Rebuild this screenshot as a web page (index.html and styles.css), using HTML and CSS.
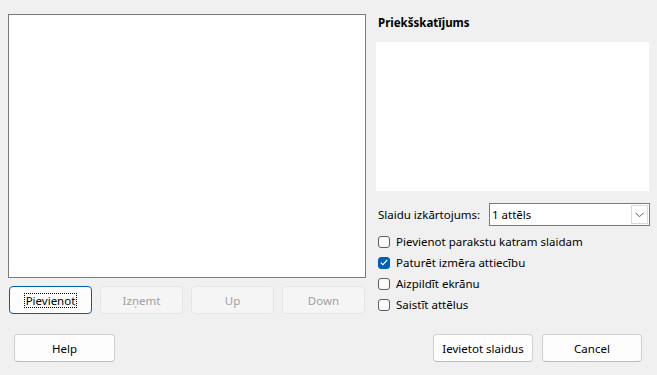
FILE: index.html
```html
<!DOCTYPE html>
<html lang="lv">
<head>
<meta charset="utf-8">
<title>Priekšskatījums</title>
<link rel="stylesheet" href="styles.css">
</head>
<body>
<div class="dialog">
  <div class="main">
    <div class="left">
      <div class="listbox"></div>
      <div class="btnrow">
        <button class="btn focused"><span class="focus">Pievienot</span></button>
        <button class="btn" disabled>Izņemt</button>
        <button class="btn" disabled>Up</button>
        <button class="btn" disabled>Down</button>
      </div>
    </div>
    <div class="right">
      <div class="title">Priekšskatījums</div>
      <div class="preview"></div>
      <div class="layout-row">
        <span class="label">Slaidu izkārtojums:</span>
        <div class="combo">
          <span class="combo-value">1 attēls</span>
          <span class="combo-btn">
            <svg width="9" height="6" viewBox="0 0 9 6"><path d="M0.5 0.8 L4.5 4.8 L8.5 0.8" fill="none" stroke="#5a5a5a" stroke-width="1"/></svg>
          </span>
        </div>
      </div>
      <div class="checks">
        <div class="check"><span class="box"></span><span>Pievienot parakstu katram slaidam</span></div>
        <div class="check"><span class="box checked"><svg width="8" height="7" viewBox="0 0 8 7"><path d="M0.8 3.6 L2.9 5.6 L7.2 1" fill="none" stroke="#fff" stroke-width="1.2"/></svg></span><span>Paturēt izmēra attiecību</span></div>
        <div class="check"><span class="box"></span><span>Aizpildīt ekrānu</span></div>
        <div class="check"><span class="box"></span><span>Saistīt attēlus</span></div>
      </div>
    </div>
  </div>
  <div class="footer">
    <button class="btn wide help">Help</button>
    <div class="footer-right">
      <button class="btn wide">Ievietot slaidus</button>
      <button class="btn wide">Cancel</button>
    </div>
  </div>
</div>
</body>
</html>
```
FILE: styles.css
```css
html, body {
  margin: 0;
  padding: 0;
  background: #f0f0f0;
}
body {
  font-family: "Segoe UI", "Noto Sans", "Open Sans", sans-serif;
  font-size: 11.5px;
  color: #000;
  width: 657px;
  height: 375px;
  overflow: hidden;
}
.dialog {
  display: flex;
  flex-direction: column;
}
.main {
  display: flex;
  padding: 14px 0 0 8px;
  gap: 10px;
}
.left {
  width: 358px;
  display: flex;
  flex-direction: column;
}
.listbox {
  height: 264px;
  background: #fff;
  border: 1px solid #7a7a7a;
  box-sizing: border-box;
}
.btnrow {
  display: flex;
  gap: 8px;
  margin-top: 8px;
  padding-left: 1px;
}
.btn {
  font-family: inherit;
  font-size: 11.5px;
  color: #000;
  background: #fdfdfd;
  border: 1px solid #d0d0d0;
  border-bottom-color: #bcbcbc;
  border-radius: 4px;
  height: 28px;
  width: 83px;
  padding: 0;
  box-sizing: border-box;
  display: flex;
  align-items: center;
  justify-content: center;
}
.btn:disabled {
  background: #f5f5f5;
  border-color: #e5e5e5;
  color: #a0a0a0;
}
.btn.focused {
  border: 1px solid #005fb8;
}
.focus {
  outline: 1px dotted #000;
  padding: 0 1px;
  line-height: 13px;
}
.right {
  width: 275px;
  display: flex;
  flex-direction: column;
}
.title {
  font-weight: bold;
  height: 28px;
  line-height: 16px;
  padding: 1px 0 0 2px;
  box-sizing: border-box;
}
.preview {
  width: 273px;
  height: 149px;
  background: #fff;
}
.layout-row {
  display: flex;
  align-items: center;
  margin-top: 12px;
  padding-left: 2px;
}
.label {
  width: 111px;
}
.combo {
  width: 161px;
  height: 23px;
  box-sizing: border-box;
  border: 1px solid #7a7a7a;
  background: #fff;
  display: flex;
  align-items: center;
  padding: 1px;
}
.combo-value {
  flex: 1;
  padding-left: 1px;
}
.combo-btn {
  width: 17px;
  height: 19px;
  box-sizing: border-box;
  border: 1px solid #dadada;
  display: flex;
  align-items: center;
  justify-content: center;
}
.checks {
  display: flex;
  flex-direction: column;
  margin-top: 5px;
  padding-left: 2px;
}
.check {
  height: 21px;
  display: flex;
  align-items: center;
  gap: 6px;
}
.box {
  width: 12px;
  height: 12px;
  box-sizing: border-box;
  border: 1px solid #5f5f5f;
  border-radius: 3px;
  background: #fbfbfb;
  display: flex;
  align-items: center;
  justify-content: center;
}
.box.checked {
  background: #005fb8;
  border-color: #005fb8;
}
.footer {
  display: flex;
  justify-content: space-between;
  margin-top: 19px;
  padding: 0 15px 0 14px;
}
.footer-right {
  display: flex;
  gap: 9px;
}
.btn.wide {
  width: 100px;
}
.btn.help {
  width: 101px;
}
```
